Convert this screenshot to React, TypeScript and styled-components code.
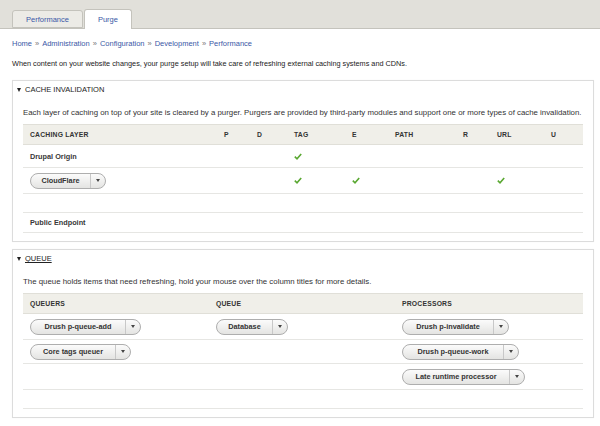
import styled, { createGlobalStyle } from "styled-components";

const Global = createGlobalStyle`
  body {
    margin: 0;
    background: #fff;
    font-family: "Liberation Sans", Arial, sans-serif;
    color: #333;
  }
`;

const TopBar = styled.div`
  height: 28px;
  background: #e1e0da;
  border-bottom: 1px solid #c4c3bc;
  display: flex;
  align-items: flex-end;
  padding-left: 12px;
  gap: 1px;
`;

const Tab = styled.div<{ $active?: boolean }>`
  height: ${(p) => (p.$active ? "20px" : "18px")};
  margin-bottom: ${(p) => (p.$active ? "-1px" : "0")};
  padding: 0 ${(p) => (p.$active ? "13px" : "13px")};
  box-sizing: border-box;
  display: flex;
  align-items: center;
  background: ${(p) => (p.$active ? "#fff" : "#ecebe6")};
  border: 1px solid #c4c3bc;
  border-bottom: ${(p) => (p.$active ? "none" : "1px solid #c4c3bc")};
  border-radius: 3px 3px 0 0;
  color: #3a58a6;
  font-size: 7.5px;
`;

const Content = styled.div`
  padding: 0 6px 0 12px;
`;

const Breadcrumb = styled.div`
  height: 14px;
  margin-top: 7px;
  display: flex;
  align-items: center;
  font-size: 7.5px;
  color: #3a58a6;
  gap: 3px;
`;

const Sep = styled.span`
  color: #777;
`;

const Intro = styled.p`
  margin: 6px 0 10px;
  height: 14px;
  display: flex;
  align-items: center;
  font-size: 7.3px;
  color: #222;
`;

const Box = styled.section`
  border: 1px solid #dcdcdc;
  box-shadow: 0 0 1px rgba(0, 0, 0, 0.05);
  padding: 0 10px 8px;
  margin-bottom: 7px;
`;

const Legend = styled.div<{ $link?: boolean }>`
  height: 17px;
  display: flex;
  align-items: center;
  margin-left: -6px;
  font-size: 7.5px;
  color: #222;
  gap: 4px;
  span {
    text-decoration: ${(p) => (p.$link ? "underline" : "none")};
  }
`;

const Caret = styled.i`
  width: 0;
  height: 0;
  border-left: 2.5px solid transparent;
  border-right: 2.5px solid transparent;
  border-top: 4px solid #222;
`;

const Desc = styled.div`
  height: 14px;
  margin: 7px 0 5px;
  display: flex;
  align-items: center;
  font-size: 7.85px;
  color: #333;
  white-space: nowrap;
`;

const Table = styled.table`
  width: 100%;
  border-collapse: collapse;
  table-layout: fixed;
  font-size: 7.3px;
`;

const HeadCell = styled.th<{ $w: number }>`
  width: ${(p) => p.$w - 7}px;
  height: 19px;
  padding: 0 0 0 7px;
  text-align: left;
  background: #f0efe9;
  border-top: 1px solid #e0dfd8;
  border-bottom: 1px solid #e0dfd8;
  font-weight: bold;
  font-size: 6.8px;
  color: #333;
  letter-spacing: 0.2px;
`;

const Row = styled.tr<{ $h: number }>`
  height: ${(p) => p.$h}px;
  border-bottom: 1px solid #e6e6e3;
`;

const Cell = styled.td`
  padding: 0 0 0 7px;
  vertical-align: middle;
  font-weight: bold;
  color: #383838;
`;

const Check = styled.svg`
  display: block;
  width: 8px;
  height: 7px;
`;

const Split = styled.span`
  display: inline-flex;
  align-items: stretch;
  height: 14px;
  border: 1px solid #aeaeae;
  border-radius: 8px;
  background: linear-gradient(#fbfbfb, #e4e4e2);
  font-weight: bold;
  font-size: 7.3px;
  color: #333;
  overflow: hidden;
`;

const SplitMain = styled.span<{ $w: number }>`
  width: ${(p) => p.$w}px;
  display: flex;
  align-items: center;
  justify-content: center;
  border-right: 1px solid #c8c8c8;
`;

const SplitArrow = styled.span`
  width: 14px;
  display: flex;
  align-items: center;
  justify-content: center;
  &::after {
    content: "";
    border-left: 2px solid transparent;
    border-right: 2px solid transparent;
    border-top: 3px solid #444;
  }
`;

function Tick() {
  return (
    <Check viewBox="0 0 8 7">
      <path d="M0.8 3.6 L3 5.8 L7.2 1" fill="none" stroke="#5aa832" strokeWidth="1.6" />
    </Check>
  );
}

function SplitButton({ label, w }: { label: string; w: number }) {
  return (
    <Split>
      <SplitMain $w={w}>{label}</SplitMain>
      <SplitArrow />
    </Split>
  );
}

const cacheCols: [string, number][] = [
  ["CACHING LAYER", 194],
  ["P", 33],
  ["D", 37],
  ["TAG", 58],
  ["E", 43],
  ["PATH", 68],
  ["R", 34],
  ["URL", 54],
  ["U", 39],
];

const queueCols: [string, number][] = [
  ["QUEUERS", 186],
  ["QUEUE", 186],
  ["PROCESSORS", 188],
];

export default function App() {
  return (
    <>
      <Global />
      <TopBar>
        <Tab>Performance</Tab>
        <Tab $active>Purge</Tab>
      </TopBar>
      <Content>
        <Breadcrumb>
          <span>Home</span><Sep>»</Sep>
          <span>Administration</span><Sep>»</Sep>
          <span>Configuration</span><Sep>»</Sep>
          <span>Development</span><Sep>»</Sep>
          <span>Performance</span>
        </Breadcrumb>
        <Intro>
          When content on your website changes, your purge setup will take care of refreshing external caching systems and CDNs.
        </Intro>

        <Box>
          <Legend>
            <Caret />
            <span>CACHE INVALIDATION</span>
          </Legend>
          <Desc>
            Each layer of caching on top of your site is cleared by a purger. Purgers are provided by third-party modules and support one or more types of cache invalidation.
          </Desc>
          <Table>
            <thead>
              <tr>
                {cacheCols.map(([t, w]) => (
                  <HeadCell key={t} $w={w}>{t}</HeadCell>
                ))}
              </tr>
            </thead>
            <tbody>
              <Row $h={23}>
                <Cell>Drupal Origin</Cell>
                <Cell /><Cell />
                <Cell><Tick /></Cell>
                <Cell /><Cell /><Cell /><Cell /><Cell />
              </Row>
              <Row $h={26}>
                <Cell><SplitButton label="CloudFlare" w={59} /></Cell>
                <Cell /><Cell />
                <Cell><Tick /></Cell>
                <Cell><Tick /></Cell>
                <Cell /><Cell />
                <Cell><Tick /></Cell>
                <Cell />
              </Row>
              <Row $h={19}>
                <Cell colSpan={9} />
              </Row>
              <Row $h={20}>
                <Cell>Public Endpoint</Cell>
                <Cell colSpan={8} />
              </Row>
            </tbody>
          </Table>
        </Box>

        <Box>
          <Legend $link>
            <Caret />
            <span>QUEUE</span>
          </Legend>
          <Desc>
            The queue holds items that need refreshing, hold your mouse over the column titles for more details.
          </Desc>
          <Table>
            <thead>
              <tr>
                {queueCols.map(([t, w]) => (
                  <HeadCell key={t} $w={w}>{t}</HeadCell>
                ))}
              </tr>
            </thead>
            <tbody>
              <Row $h={26}>
                <Cell><SplitButton label="Drush p-queue-add" w={94} /></Cell>
                <Cell><SplitButton label="Database" w={55} /></Cell>
                <Cell><SplitButton label="Drush p-invalidate" w={90} /></Cell>
              </Row>
              <Row $h={24}>
                <Cell><SplitButton label="Core tags queuer" w={84} /></Cell>
                <Cell />
                <Cell><SplitButton label="Drush p-queue-work" w={100} /></Cell>
              </Row>
              <Row $h={26}>
                <Cell /><Cell />
                <Cell><SplitButton label="Late runtime processor" w={106} /></Cell>
              </Row>
              <Row $h={19}>
                <Cell colSpan={3} />
              </Row>
            </tbody>
          </Table>
        </Box>
      </Content>
    </>
  );
}
